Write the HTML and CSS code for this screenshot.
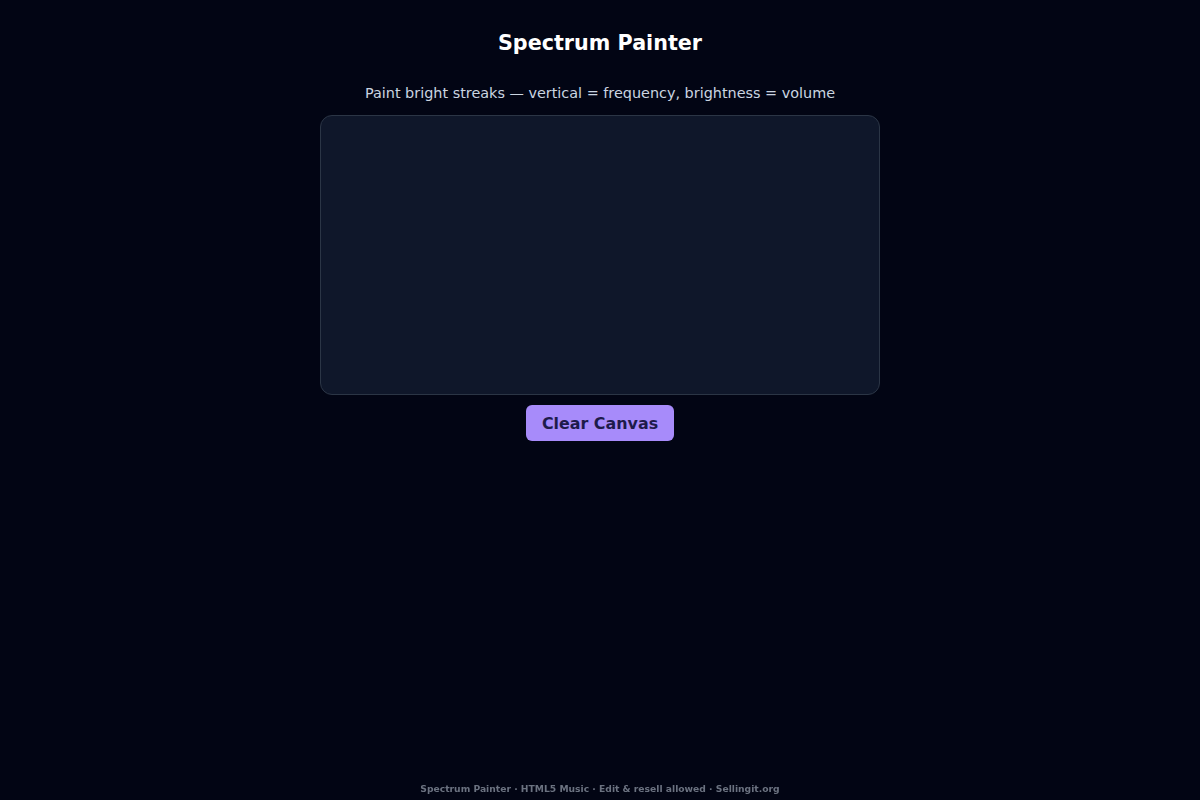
FILE: index.html
```html
<!DOCTYPE html>
<html lang="en">
<head>
    <meta charset="UTF-8">
    <meta name="viewport" content="width=device-width, initial-scale=1.0">
    <title>Spectrum Painter</title>
    <link rel="stylesheet" href="styles.css">
</head>
<body>
    <div class="app">
        <h1>Spectrum Painter</h1>
        <p class="hint">Paint bright streaks — vertical = frequency, brightness = volume</p>
        <canvas id="paint" class="paint" width="558" height="278"></canvas>
        <button class="clear-btn" type="button">Clear Canvas</button>
    </div>
    <footer class="footer">Spectrum Painter · HTML5 Music · Edit &amp; resell allowed · Sellingit.org</footer>
</body>
</html>
```

FILE: styles.css
```css
body {
    margin: 0;
    padding: 0;
    min-height: 100vh;
    background: #020514;
    color: #e5e7eb;
    font-family: "DejaVu Sans", Verdana, sans-serif;
}

.app {
    display: flex;
    flex-direction: column;
    align-items: center;
    padding-top: 31px;
}

h1 {
    margin: 0;
    font-size: 20.7px;
    line-height: 24px;
    font-weight: bold;
    color: #ffffff;
}

.hint {
    margin: 30px 0 13px;
    font-size: 14.4px;
    line-height: 17px;
    color: #cbd5e1;
}

.paint {
    display: block;
    background: #0f172a;
    border: 1px solid #2b3545;
    border-radius: 12px;
}

.clear-btn {
    margin-top: 10px;
    padding: 0 16px;
    height: 36px;
    border: none;
    border-radius: 6px;
    background: #a78bfa;
    color: #1e1b4b;
    font-family: "DejaVu Sans", Verdana, sans-serif;
    font-size: 15.9px;
    font-weight: bold;
    cursor: pointer;
}

.footer {
    position: fixed;
    left: 0;
    right: 0;
    bottom: 6px;
    text-align: center;
    font-size: 9.2px;
    font-weight: bold;
    color: #6b7280;
}
```
